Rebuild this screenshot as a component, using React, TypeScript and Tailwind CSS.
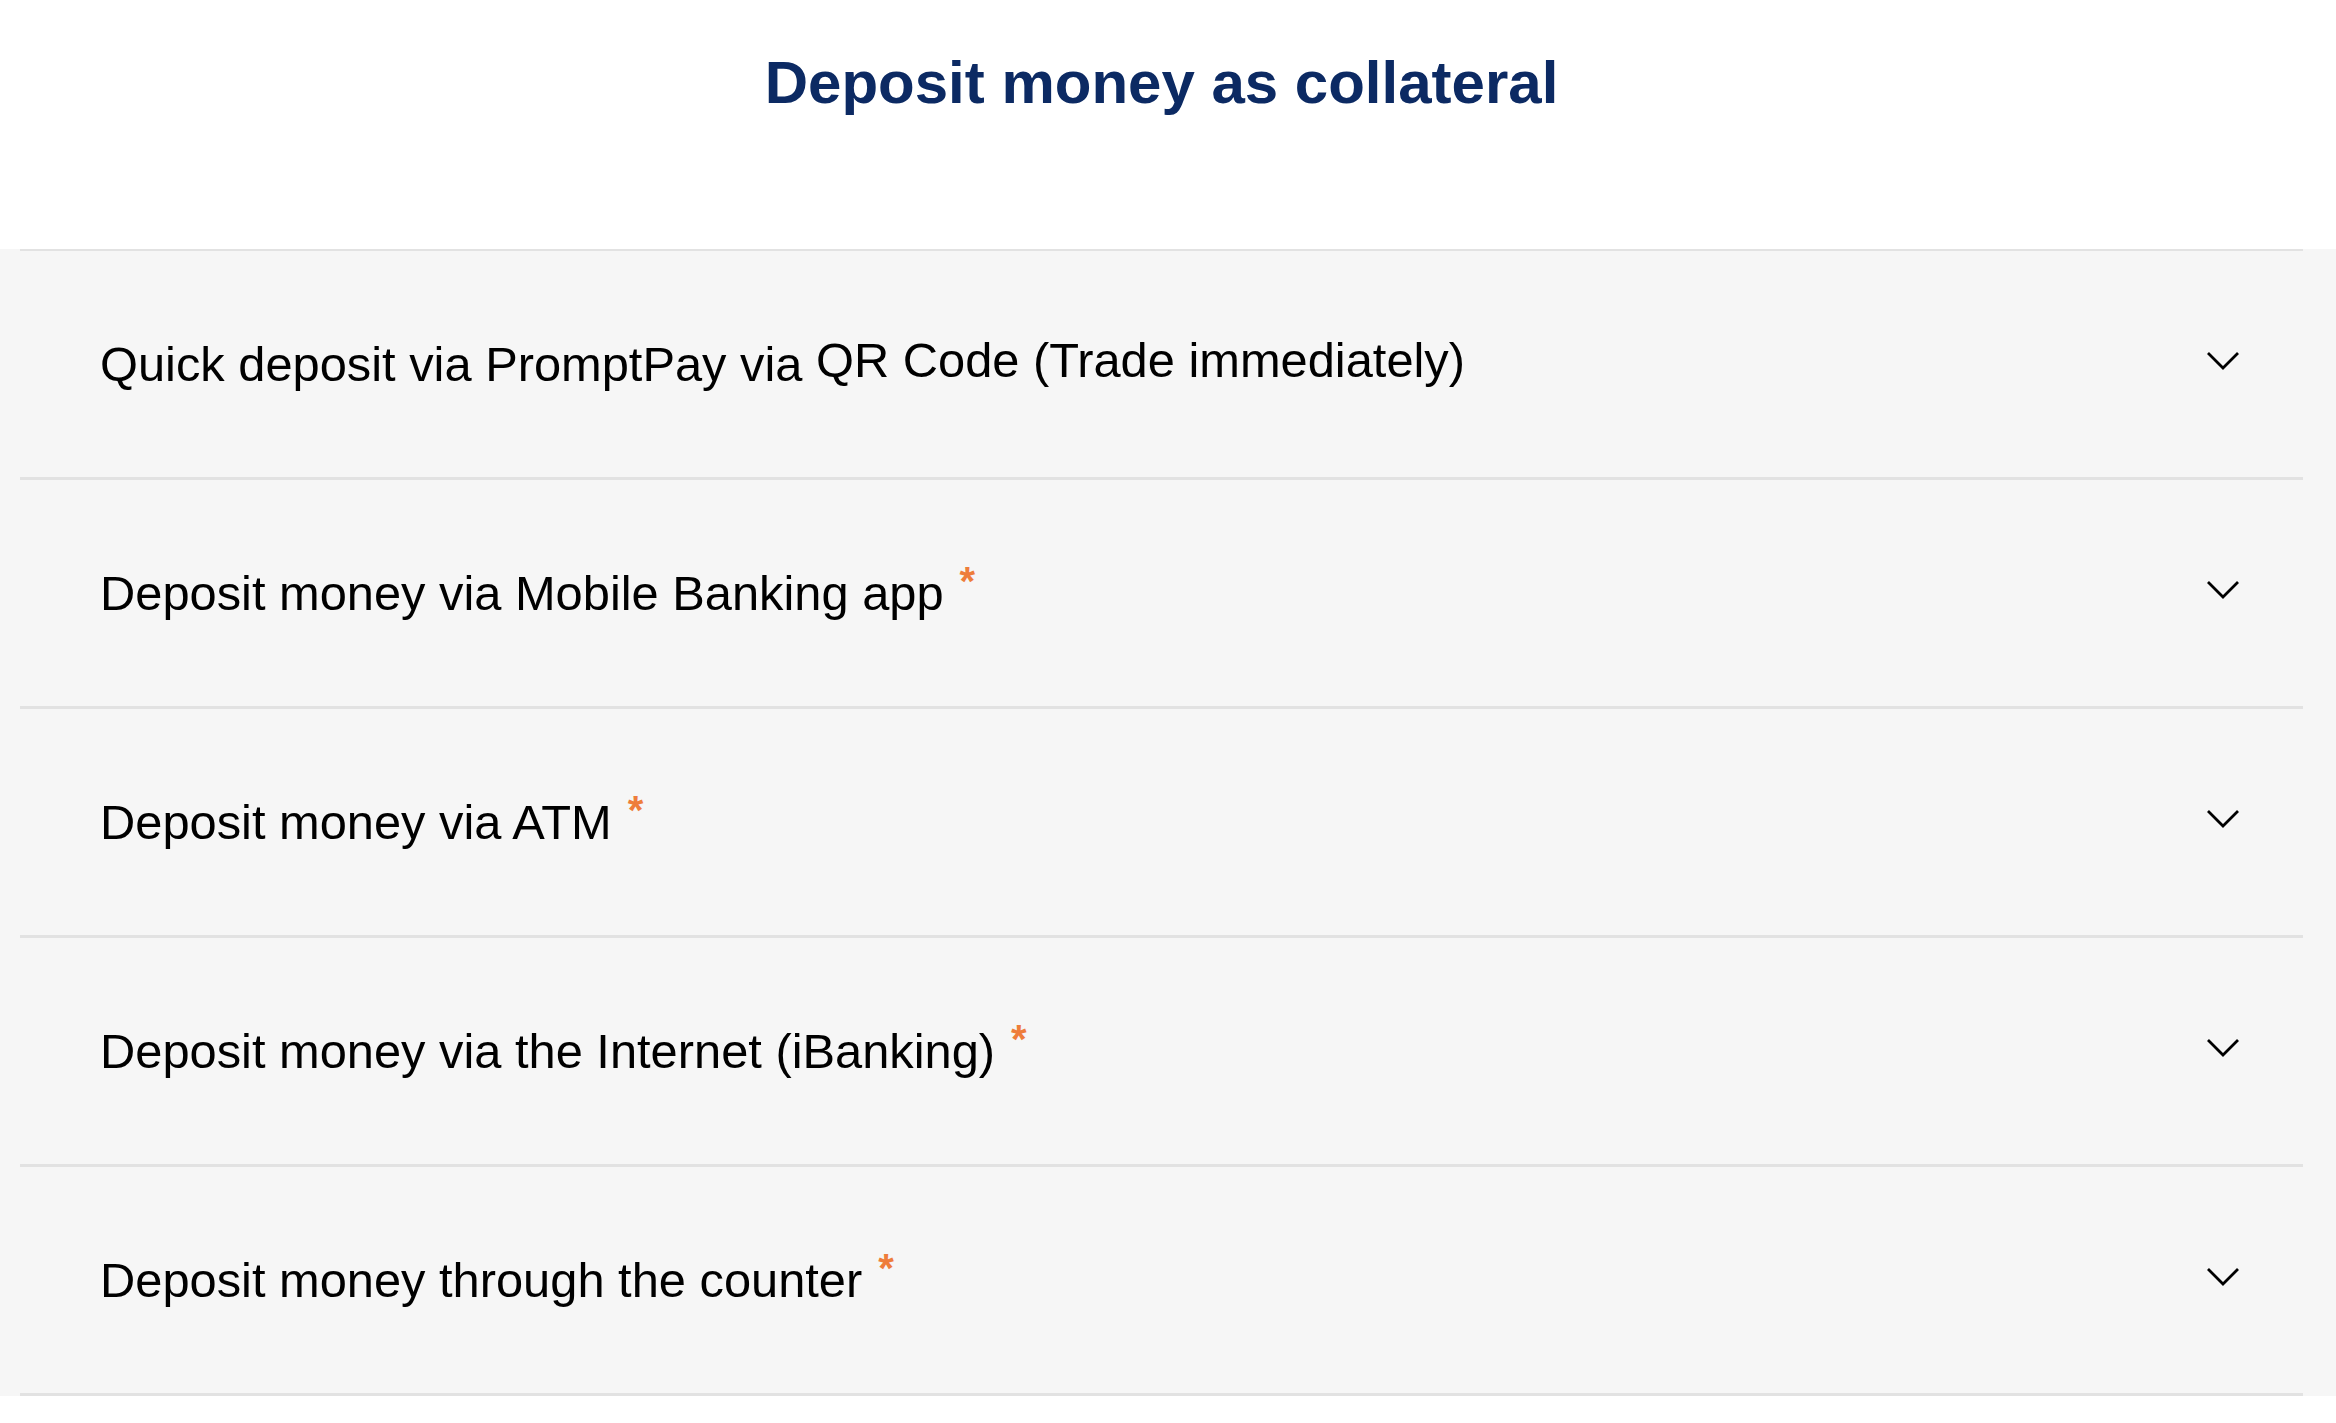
import React from "react";

type Item = { label: React.ReactNode; required?: boolean };

const items: Item[] = [
  {
    label: (
      <>
        Quick deposit via PromptPay via{" "}
        <span className="relative -top-[4px]">QR Code (Trade immediately)</span>
      </>
    ),
  },
  { label: "Deposit money via Mobile Banking app", required: true },
  { label: "Deposit money via ATM", required: true },
  { label: "Deposit money via the Internet (iBanking)", required: true },
  { label: "Deposit money through the counter", required: true },
];

function Chevron() {
  return (
    <svg width="34" height="20" viewBox="0 0 34 20" fill="none" className="mb-[6px] shrink-0">
      <polyline
        points="2,2 17,17 32,2"
        stroke="#000"
        strokeWidth="2.8"
        strokeLinecap="butt"
        strokeLinejoin="miter"
      />
    </svg>
  );
}

export default function App() {
  return (
    <div className="min-h-[1423px] bg-white" style={{ fontFamily: '"Liberation Sans", Arial, Helvetica, sans-serif' }}>
      <div className="pr-[13px] pt-[53px] pb-[136px]">
        <h1 className="text-center text-[60px] font-bold leading-none text-[#0c2a63]">
          Deposit money as collateral
        </h1>
      </div>

      <div className="bg-[#f6f6f6] pl-[20px] pr-[33px]">
        <div className="border-t-2 border-[#e2e2e2]">
          {items.map((item, i) => (
            <div
              key={i}
              className="flex h-[229px] items-center justify-between border-b-[3px] border-[#e2e2e2] pl-[80px] pr-[63px]"
            >
              <span className="text-[48.8px] leading-none text-black">
                {item.label}
                {item.required && (
                  <span className="relative -top-[8px] ml-[16px] align-top text-[40px] font-bold leading-none text-[#ee7d3b]">*</span>
                )}
              </span>
              <Chevron />
            </div>
          ))}
        </div>
      </div>
    </div>
  );
}
